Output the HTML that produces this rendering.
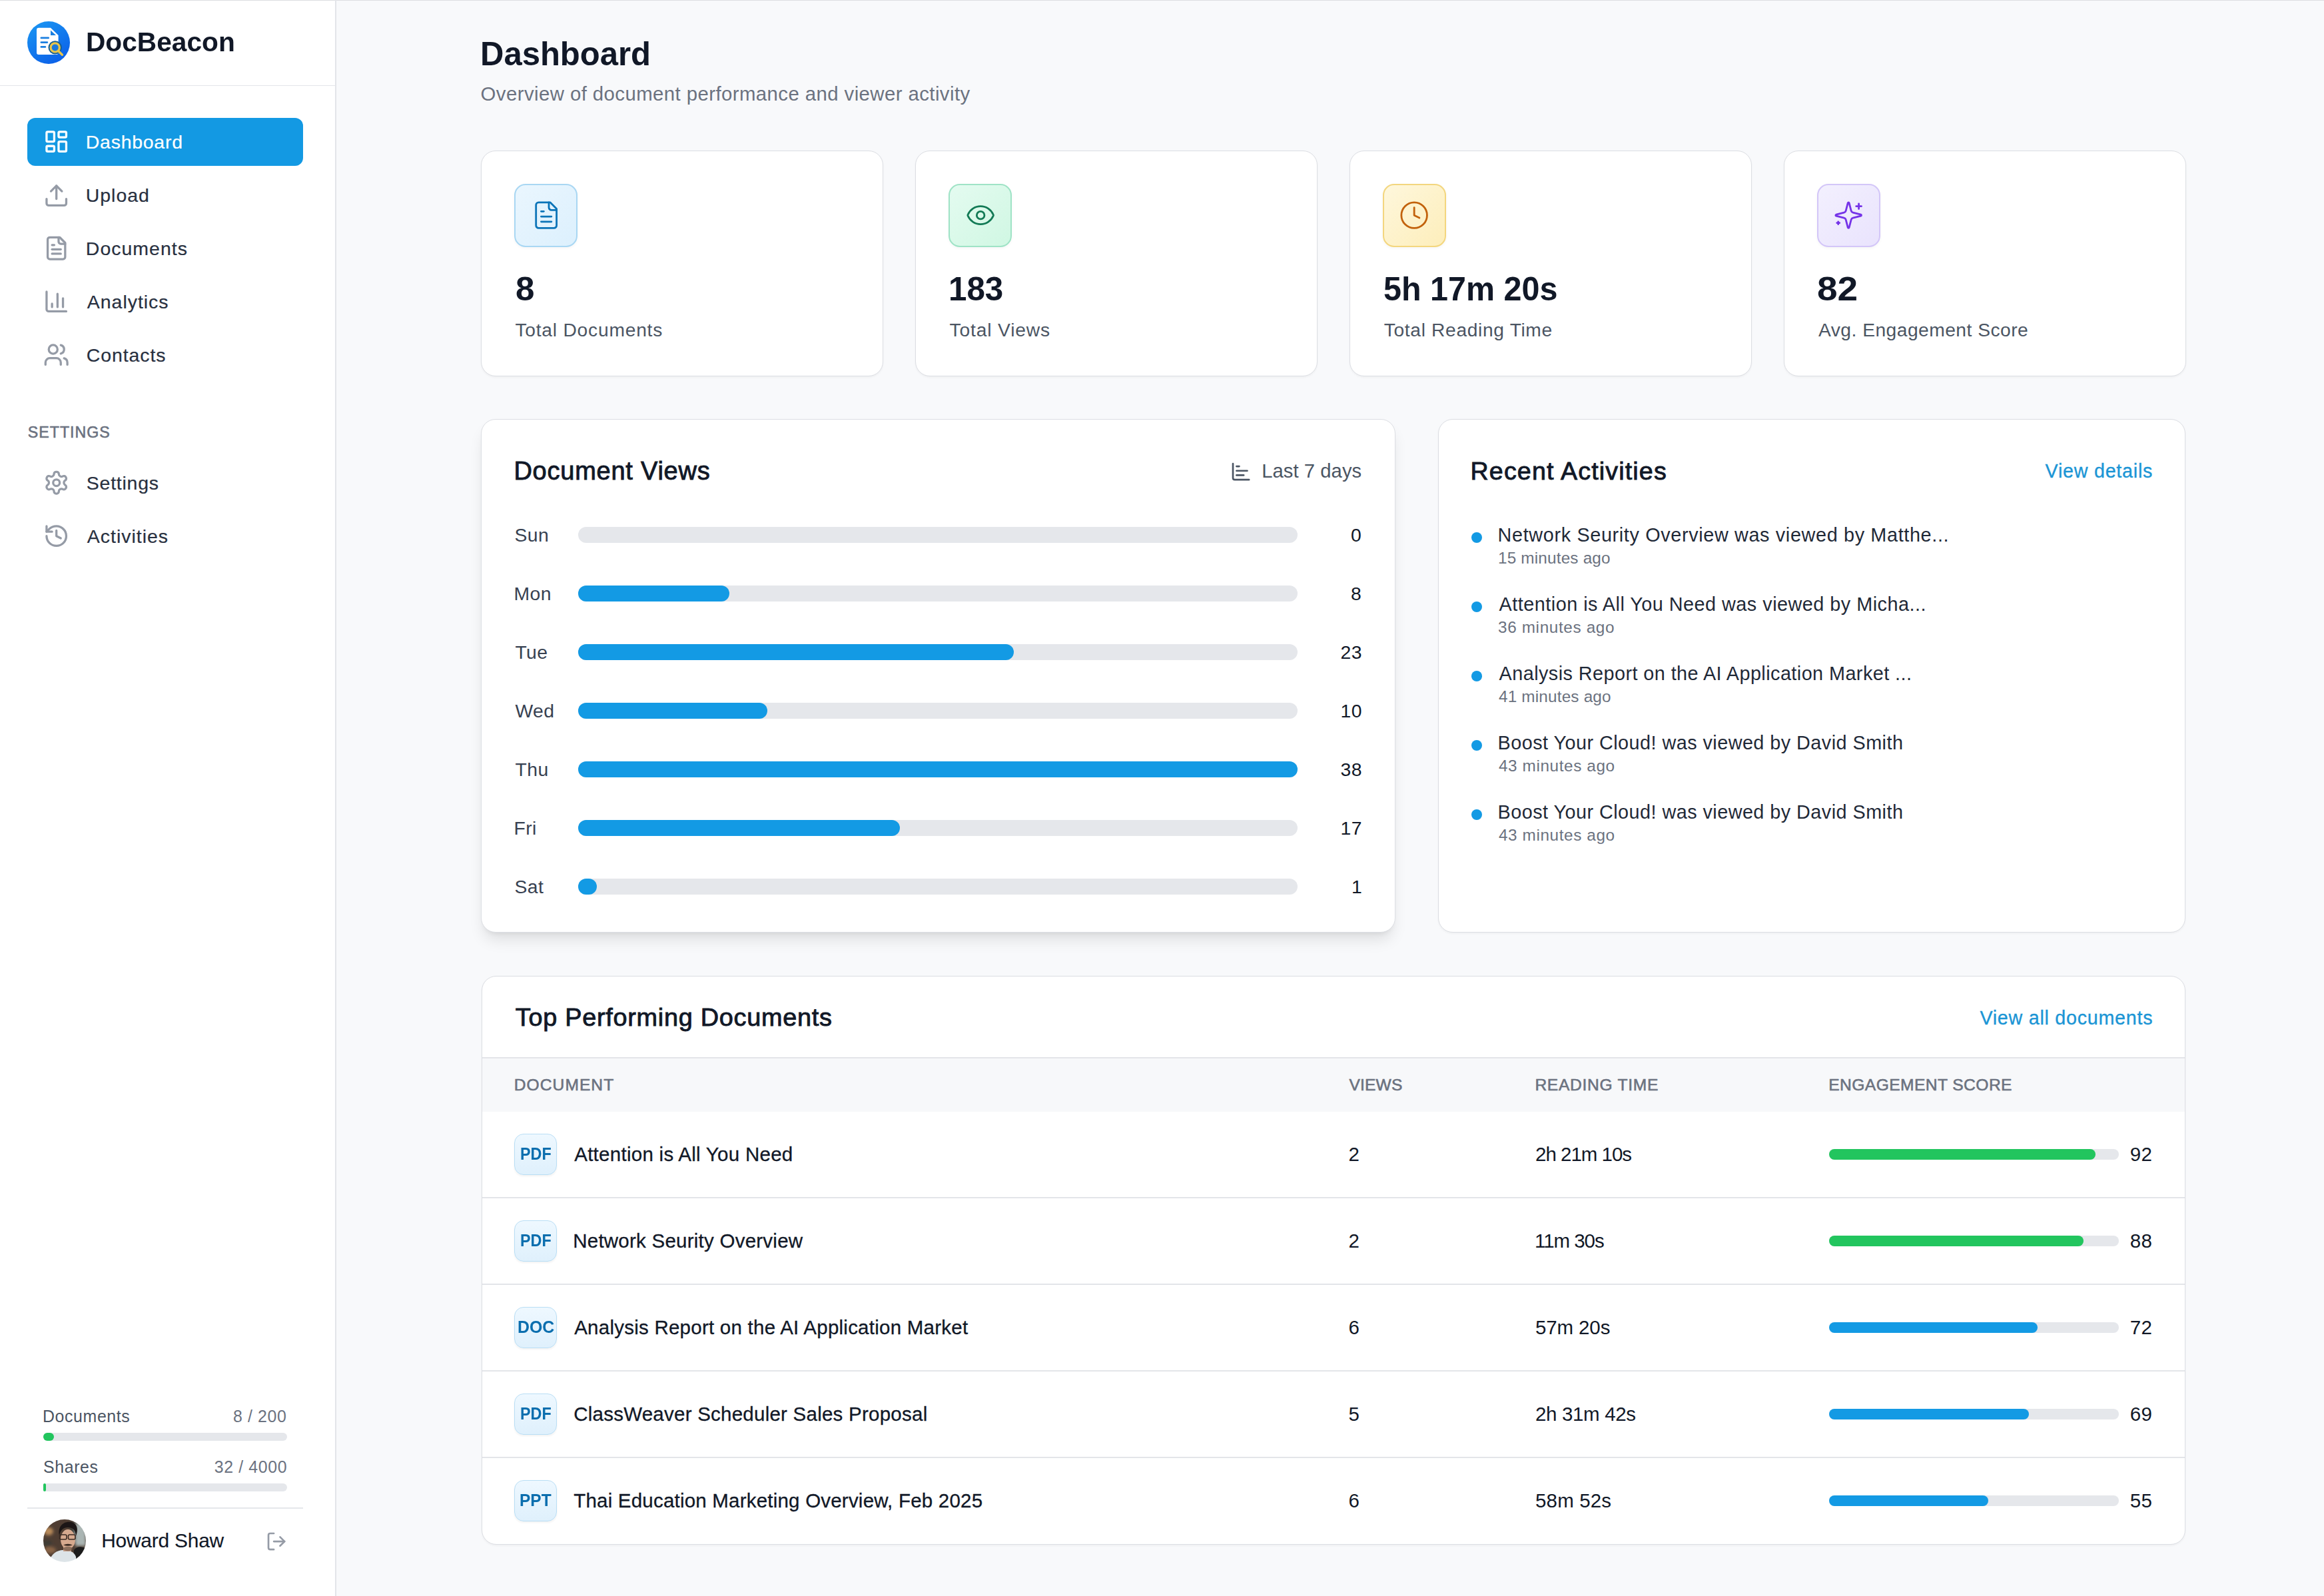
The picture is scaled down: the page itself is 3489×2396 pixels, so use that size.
<!DOCTYPE html>
<html><head><meta charset="utf-8"><title>DocBeacon Dashboard</title>
<style>
html,body{margin:0;padding:0;width:3489px;height:2396px;overflow:hidden;background:#f8f9fb}
body{position:relative;font-family:"Liberation Sans",sans-serif}
.t{position:absolute;line-height:0;white-space:nowrap}
</style></head><body>
<div style="position:absolute;left:0.00px;top:0.00px;width:3489.00px;height:2396.00px;background:#f8f9fb"></div>
<div style="position:absolute;left:0.00px;top:0.00px;width:504.50px;height:2396.00px;background:#ffffff"></div>
<div style="position:absolute;left:0.00px;top:0.00px;width:3489.00px;height:1.30px;background:#dcdde1"></div>
<div style="position:absolute;left:503.00px;top:0.00px;width:1.50px;height:2396.00px;background:#e3e5e9"></div>
<div style="position:absolute;left:0.00px;top:127.50px;width:503.00px;height:1.50px;background:#e3e5e9"></div>
<svg style="position:absolute;left:41px;top:32px" width="64" height="64" viewBox="0 0 64 64">
<defs><linearGradient id="lg" x1="0.2" y1="0" x2="0.8" y2="1"><stop offset="0" stop-color="#1a94f2"/><stop offset="1" stop-color="#0b5ee8"/></linearGradient></defs>
<circle cx="32" cy="32" r="32" fill="url(#lg)"/>
<path d="M17 9.7 h18 l11.6 11.3 v26 a3 3 0 0 1 -3 3 h-26.6 a3 3 0 0 1 -3 -3 v-34.3 a3 3 0 0 1 3 -3z" fill="#ffffff"/>
<path d="M35 13.5 l8 7.6 h-8z" fill="#1a7fe0"/>
<rect x="19.5" y="23.6" width="13.5" height="2.6" rx="1.3" fill="#1a7fe0"/>
<rect x="19.5" y="30.3" width="11.7" height="2.6" rx="1.3" fill="#1a7fe0"/>
<rect x="19.5" y="37.1" width="8.7" height="2.6" rx="1.3" fill="#1a7fe0"/>
<circle cx="41.7" cy="39.4" r="10.2" fill="#155f96"/>
<circle cx="41.7" cy="39.4" r="6.6" fill="#1a78dc" stroke="#e9c54a" stroke-width="3.2"/>
<path d="M47 45 l5.4 5.2" stroke="#e9c54a" stroke-width="3.4" stroke-linecap="round"/>
</svg>
<div style="position:absolute;left:41.00px;top:177.00px;width:414.00px;height:72.00px;background:#1399e3;border-radius:12px"></div>
<svg style="position:absolute;left:65.30px;top:193.40px" width="39.40" height="39.40" viewBox="0 0 24 24" fill="none" stroke="#ffffff" stroke-width="2" stroke-linecap="round" stroke-linejoin="round"><rect width="7" height="9" x="3" y="3" rx="1"/><rect width="7" height="5" x="14" y="3" rx="1"/><rect width="7" height="9" x="14" y="12" rx="1"/><rect width="7" height="5" x="3" y="16" rx="1"/></svg>
<svg style="position:absolute;left:65.30px;top:273.50px" width="39.40" height="39.40" viewBox="0 0 24 24" fill="none" stroke="#959ba6" stroke-width="2" stroke-linecap="round" stroke-linejoin="round"><path d="M21 15v4a2 2 0 0 1-2 2H5a2 2 0 0 1-2-2v-4"/><polyline points="17 8 12 3 7 8"/><line x1="12" x2="12" y1="3" y2="15"/></svg>
<svg style="position:absolute;left:65.30px;top:353.20px" width="39.40" height="39.40" viewBox="0 0 24 24" fill="none" stroke="#959ba6" stroke-width="2" stroke-linecap="round" stroke-linejoin="round"><path d="M15 2H6a2 2 0 0 0-2 2v16a2 2 0 0 0 2 2h12a2 2 0 0 0 2-2V7Z"/><path d="M14 2v4a2 2 0 0 0 2 2h4"/><path d="M10 9H8"/><path d="M16 13H8"/><path d="M16 17H8"/></svg>
<svg style="position:absolute;left:65.30px;top:432.90px" width="39.40" height="39.40" viewBox="0 0 24 24" fill="none" stroke="#959ba6" stroke-width="2" stroke-linecap="round" stroke-linejoin="round"><path d="M3 3v16a2 2 0 0 0 2 2h16"/><path d="M18 17V9"/><path d="M13 17V5"/><path d="M8 17v-3"/></svg>
<svg style="position:absolute;left:65.30px;top:512.80px" width="39.40" height="39.40" viewBox="0 0 24 24" fill="none" stroke="#959ba6" stroke-width="2" stroke-linecap="round" stroke-linejoin="round"><path d="M16 21v-2a4 4 0 0 0-4-4H6a4 4 0 0 0-4 4v2"/><circle cx="9" cy="7" r="4"/><path d="M22 21v-2a4 4 0 0 0-3-3.87"/><path d="M16 3.13a4 4 0 0 1 0 7.75"/></svg>
<svg style="position:absolute;left:65.30px;top:704.90px" width="39.40" height="39.40" viewBox="0 0 24 24" fill="none" stroke="#959ba6" stroke-width="2" stroke-linecap="round" stroke-linejoin="round"><path d="M12.22 2h-.44a2 2 0 0 0-2 2v.18a2 2 0 0 1-1 1.73l-.43.25a2 2 0 0 1-2 0l-.15-.08a2 2 0 0 0-2.73.73l-.22.38a2 2 0 0 0 .73 2.730l.15.1a2 2 0 0 1 1 1.72v.51a2 2 0 0 1-1 1.74l-.15.09a2 2 0 0 0-.73 2.73l.22.38a2 2 0 0 0 2.73.73l.15-.08a2 2 0 0 1 2 0l.43.25a2 2 0 0 1 1 1.73V20a2 2 0 0 0 2 2h.44a2 2 0 0 0 2-2v-.18a2 2 0 0 1 1-1.73l.43-.25a2 2 0 0 1 2 0l.15.08a2 2 0 0 0 2.73-.73l.22-.39a2 2 0 0 0-.73-2.73l-.15-.08a2 2 0 0 1-1-1.74v-.5a2 2 0 0 1 1-1.74l.15-.09a2 2 0 0 0 .73-2.73l-.22-.38a2 2 0 0 0-2.73-.73l-.15.08a2 2 0 0 1-2 0l-.43-.25a2 2 0 0 1-1-1.73V4a2 2 0 0 0-2-2z"/><circle cx="12" cy="12" r="3"/></svg>
<svg style="position:absolute;left:65.30px;top:784.90px" width="39.40" height="39.40" viewBox="0 0 24 24" fill="none" stroke="#959ba6" stroke-width="2" stroke-linecap="round" stroke-linejoin="round"><path d="M3 12a9 9 0 1 0 9-9 9.75 9.75 0 0 0-6.74 2.74L3 8"/><path d="M3 3v5h5"/><path d="M12 7v5l4 2"/></svg>
<div style="position:absolute;left:65.00px;top:2151.00px;width:365.70px;height:12.00px;background:#e5e7eb;border-radius:6px"></div>
<div style="position:absolute;left:65.00px;top:2151.00px;width:15.50px;height:12.00px;background:#22c55e;border-radius:6px"></div>
<div style="position:absolute;left:65.00px;top:2227.00px;width:365.70px;height:12.00px;background:#e5e7eb;border-radius:6px"></div>
<div style="position:absolute;left:65.00px;top:2227.00px;width:3.50px;height:12.00px;background:#22c55e;border-radius:2px"></div>
<div style="position:absolute;left:41.00px;top:2263.00px;width:414.00px;height:1.50px;background:#e5e7eb"></div>
<svg style="position:absolute;left:65px;top:2281px" width="64" height="64" viewBox="0 0 64 64">
<defs><clipPath id="av"><circle cx="32" cy="32" r="32"/></clipPath>
<filter id="bl" x="-10%" y="-10%" width="120%" height="120%"><feGaussianBlur stdDeviation="0.7"/></filter>
<filter id="bl2"><feGaussianBlur stdDeviation="2"/></filter></defs>
<g clip-path="url(#av)"><g filter="url(#bl)">
<rect width="64" height="64" fill="#4f3e33"/>
<g filter="url(#bl2)">
<ellipse cx="8" cy="18" rx="7" ry="6" fill="#b88a5a"/>
<ellipse cx="6" cy="36" rx="7" ry="5" fill="#3e3a36"/>
<ellipse cx="10" cy="46" rx="9" ry="5" fill="#8a6547"/>
<rect x="48" y="6" width="16" height="34" fill="#aab5b3"/>
<rect x="40" y="4" width="8" height="30" fill="#3b3a35"/>
</g>
<path d="M44 64 L46 46 C50 40 58 40 64 44 L64 64z" fill="#1b1b1b"/>
<path d="M8 64 C12 52 20 46 30 46 C38 46 46 48 49 56 L50 64z" fill="#dde4e8"/>
<rect x="30" y="40" width="12" height="8" fill="#c49a82"/>
<ellipse cx="37" cy="30" rx="11" ry="15" fill="#d6a98e"/>
<path d="M24 24 C21 8 33 2 42 4 C51 6 53 15 49 25 C48 15 44 12 37 12 C30 12 26 16 24 24z" fill="#1e1915"/>
<rect x="24.5" y="23" width="10.5" height="7" rx="2" fill="none" stroke="#3a2a22" stroke-width="1.6"/>
<rect x="37.5" y="23" width="10.5" height="7" rx="2" fill="none" stroke="#3a2a22" stroke-width="1.6"/>
<path d="M30 38.5 q7 -3.5 14 0 q-7 2.5 -14 0z" fill="#3a2a20"/>
<ellipse cx="37" cy="44" rx="7" ry="3.2" fill="#7a6050" opacity="0.8"/>
</g></g></svg>
<svg style="position:absolute;left:398.90px;top:2297.80px" width="32.20" height="32.20" viewBox="0 0 24 24" fill="none" stroke="#959ba6" stroke-width="2" stroke-linecap="round" stroke-linejoin="round"><path d="M9 21H5a2 2 0 0 1-2-2V5a2 2 0 0 1 2-2h4"/><polyline points="16 17 21 12 16 7"/><line x1="21" x2="9" y1="12" y2="12"/></svg>
<div style="position:absolute;left:722.30px;top:226.00px;width:603.90px;height:339.00px;background:#fff;border:1.5px solid #dcdee3;border-radius:22px;box-sizing:border-box;box-shadow:0 1.5px 3px rgba(0,0,0,0.04)"></div>
<div style="position:absolute;left:772.30px;top:275.50px;width:95.00px;height:95.00px;background:linear-gradient(135deg,#eaf6fe,#dcf0fd);border:2px solid #a9d7f3;border-radius:17px;box-sizing:border-box;box-shadow:0 2px 4px rgba(0,0,0,0.04)"></div>
<svg style="position:absolute;left:796.65px;top:299.85px" width="46.30" height="46.30" viewBox="0 0 24 24" fill="none" stroke="#0b74b8" stroke-width="1.45" stroke-linecap="round" stroke-linejoin="round"><path d="M15 2H6a2 2 0 0 0-2 2v16a2 2 0 0 0 2 2h12a2 2 0 0 0 2-2V7Z"/><path d="M14 2v4a2 2 0 0 0 2 2h4"/><path d="M10 9H8"/><path d="M16 13H8"/><path d="M16 17H8"/></svg>
<div style="position:absolute;left:1374.20px;top:226.00px;width:603.90px;height:339.00px;background:#fff;border:1.5px solid #dcdee3;border-radius:22px;box-sizing:border-box;box-shadow:0 1.5px 3px rgba(0,0,0,0.04)"></div>
<div style="position:absolute;left:1424.20px;top:275.50px;width:95.00px;height:95.00px;background:linear-gradient(135deg,#e4fbf0,#d0f7e3);border:2px solid #9fe3c6;border-radius:17px;box-sizing:border-box;box-shadow:0 2px 4px rgba(0,0,0,0.04)"></div>
<svg style="position:absolute;left:1448.55px;top:299.85px" width="46.30" height="46.30" viewBox="0 0 24 24" fill="none" stroke="#127a55" stroke-width="1.45" stroke-linecap="round" stroke-linejoin="round"><path d="M2.062 12.348a1 1 0 0 1 0-.696 10.75 10.75 0 0 1 19.876 0 1 1 0 0 1 0 .696 10.75 10.75 0 0 1-19.876 0"/><circle cx="12" cy="12" r="3"/></svg>
<div style="position:absolute;left:2026.10px;top:226.00px;width:603.90px;height:339.00px;background:#fff;border:1.5px solid #dcdee3;border-radius:22px;box-sizing:border-box;box-shadow:0 1.5px 3px rgba(0,0,0,0.04)"></div>
<div style="position:absolute;left:2076.10px;top:275.50px;width:95.00px;height:95.00px;background:linear-gradient(135deg,#fef7dc,#fdeebb);border:2px solid #f3d67e;border-radius:17px;box-sizing:border-box;box-shadow:0 2px 4px rgba(0,0,0,0.04)"></div>
<svg style="position:absolute;left:2100.45px;top:299.85px" width="46.30" height="46.30" viewBox="0 0 24 24" fill="none" stroke="#c2620c" stroke-width="1.45" stroke-linecap="round" stroke-linejoin="round"><circle cx="12" cy="12" r="10"/><polyline points="12 6 12 12 16 14"/></svg>
<div style="position:absolute;left:2678.00px;top:226.00px;width:603.90px;height:339.00px;background:#fff;border:1.5px solid #dcdee3;border-radius:22px;box-sizing:border-box;box-shadow:0 1.5px 3px rgba(0,0,0,0.04)"></div>
<div style="position:absolute;left:2728.00px;top:275.50px;width:95.00px;height:95.00px;background:linear-gradient(135deg,#f3f0fe,#e9e3fd);border:2px solid #d3c6f8;border-radius:17px;box-sizing:border-box;box-shadow:0 2px 4px rgba(0,0,0,0.04)"></div>
<svg style="position:absolute;left:2752.35px;top:299.85px" width="46.30" height="46.30" viewBox="0 0 24 24" fill="none" stroke="#7533e8" stroke-width="1.45" stroke-linecap="round" stroke-linejoin="round"><path d="M9.937 15.5A2 2 0 0 0 8.5 14.063l-6.135-1.582a.5.5 0 0 1 0-.962L8.5 9.936A2 2 0 0 0 9.937 8.5l1.582-6.135a.5.5 0 0 1 .963 0L14.063 8.5A2 2 0 0 0 15.5 9.937l6.135 1.581a.5.5 0 0 1 0 .964L15.5 14.063a2 2 0 0 0-1.437 1.437l-1.582 6.135a.5.5 0 0 1-.963 0z"/><path d="M20 3v4"/><path d="M22 5h-4"/><path d="M4 17v2"/><path d="M5 18H3"/></svg>
<div style="position:absolute;left:722.20px;top:629.00px;width:1372.60px;height:770.50px;background:#fff;border:1.5px solid #dcdee3;border-radius:22px;box-sizing:border-box;box-shadow:0 15px 22px -4px rgba(0,0,0,0.10),0 6px 9px -6px rgba(0,0,0,0.10)"></div>
<svg style="position:absolute;left:1846.60px;top:691.50px" width="32.20" height="32.20" viewBox="0 0 24 24" fill="none" stroke="#4b5563" stroke-width="2" stroke-linecap="round" stroke-linejoin="round"><path d="M3 3v16a2 2 0 0 0 2 2h16"/><path d="M7 16h8"/><path d="M7 11h12"/><path d="M7 6h3"/></svg>
<div style="position:absolute;left:867.90px;top:791.45px;width:1080.60px;height:23.10px;background:#e5e7eb;border-radius:12px"></div>
<div style="position:absolute;left:867.90px;top:879.45px;width:1080.60px;height:23.10px;background:#e5e7eb;border-radius:12px"></div>
<div style="position:absolute;left:867.90px;top:879.45px;width:227.49px;height:23.10px;background:#139ae4;border-radius:12px"></div>
<div style="position:absolute;left:867.90px;top:967.45px;width:1080.60px;height:23.10px;background:#e5e7eb;border-radius:12px"></div>
<div style="position:absolute;left:867.90px;top:967.45px;width:654.05px;height:23.10px;background:#139ae4;border-radius:12px"></div>
<div style="position:absolute;left:867.90px;top:1055.45px;width:1080.60px;height:23.10px;background:#e5e7eb;border-radius:12px"></div>
<div style="position:absolute;left:867.90px;top:1055.45px;width:284.37px;height:23.10px;background:#139ae4;border-radius:12px"></div>
<div style="position:absolute;left:867.90px;top:1143.45px;width:1080.60px;height:23.10px;background:#e5e7eb;border-radius:12px"></div>
<div style="position:absolute;left:867.90px;top:1143.45px;width:1080.60px;height:23.10px;background:#139ae4;border-radius:12px"></div>
<div style="position:absolute;left:867.90px;top:1231.45px;width:1080.60px;height:23.10px;background:#e5e7eb;border-radius:12px"></div>
<div style="position:absolute;left:867.90px;top:1231.45px;width:483.43px;height:23.10px;background:#139ae4;border-radius:12px"></div>
<div style="position:absolute;left:867.90px;top:1319.45px;width:1080.60px;height:23.10px;background:#e5e7eb;border-radius:12px"></div>
<div style="position:absolute;left:867.90px;top:1319.45px;width:28.44px;height:23.10px;background:#139ae4;border-radius:12px"></div>
<div style="position:absolute;left:2158.90px;top:629.00px;width:1122.60px;height:771.00px;background:#fff;border:1.5px solid #dcdee3;border-radius:22px;box-sizing:border-box;box-shadow:0 1.5px 3px rgba(0,0,0,0.04)"></div>
<div style="position:absolute;left:2208.80px;top:798.80px;width:16.20px;height:16.20px;background:#139ae4;border-radius:50%"></div>
<div style="position:absolute;left:2208.80px;top:902.80px;width:16.20px;height:16.20px;background:#139ae4;border-radius:50%"></div>
<div style="position:absolute;left:2208.80px;top:1006.80px;width:16.20px;height:16.20px;background:#139ae4;border-radius:50%"></div>
<div style="position:absolute;left:2208.80px;top:1110.80px;width:16.20px;height:16.20px;background:#139ae4;border-radius:50%"></div>
<div style="position:absolute;left:2208.80px;top:1214.80px;width:16.20px;height:16.20px;background:#139ae4;border-radius:50%"></div>
<div style="position:absolute;left:722.70px;top:1465.30px;width:2558.80px;height:853.50px;background:#fff;border:1.5px solid #dcdee3;border-radius:22px;box-sizing:border-box;overflow:hidden;box-shadow:0 1.5px 3px rgba(0,0,0,0.04)"></div>
<div style="position:absolute;left:724.20px;top:1588.00px;width:2555.80px;height:80.90px;background:#f7f8fa"></div>
<div style="position:absolute;left:724.20px;top:1587.30px;width:2555.80px;height:1.50px;background:#e3e5e9"></div>
<div style="position:absolute;left:724.20px;top:1797.05px;width:2555.80px;height:1.50px;background:#e3e5e9"></div>
<div style="position:absolute;left:724.20px;top:1927.05px;width:2555.80px;height:1.50px;background:#e3e5e9"></div>
<div style="position:absolute;left:724.20px;top:2057.05px;width:2555.80px;height:1.50px;background:#e3e5e9"></div>
<div style="position:absolute;left:724.20px;top:2187.05px;width:2555.80px;height:1.50px;background:#e3e5e9"></div>
<div style="position:absolute;left:772.30px;top:1701.70px;width:63.30px;height:62.60px;background:linear-gradient(180deg,#eef8ff,#dff0fc);border:1.5px solid #b9def5;border-radius:14px;box-sizing:border-box;box-shadow:0 2px 3px rgba(0,0,0,0.05)"></div>
<div style="position:absolute;left:2745.70px;top:1725.10px;width:435.00px;height:15.80px;background:#e5e7eb;border-radius:8px"></div>
<div style="position:absolute;left:2745.70px;top:1725.10px;width:400.20px;height:15.80px;background:#22c55e;border-radius:8px"></div>
<div style="position:absolute;left:772.30px;top:1831.70px;width:63.30px;height:62.60px;background:linear-gradient(180deg,#eef8ff,#dff0fc);border:1.5px solid #b9def5;border-radius:14px;box-sizing:border-box;box-shadow:0 2px 3px rgba(0,0,0,0.05)"></div>
<div style="position:absolute;left:2745.70px;top:1855.10px;width:435.00px;height:15.80px;background:#e5e7eb;border-radius:8px"></div>
<div style="position:absolute;left:2745.70px;top:1855.10px;width:382.80px;height:15.80px;background:#22c55e;border-radius:8px"></div>
<div style="position:absolute;left:772.30px;top:1961.70px;width:63.30px;height:62.60px;background:linear-gradient(180deg,#eef8ff,#dff0fc);border:1.5px solid #b9def5;border-radius:14px;box-sizing:border-box;box-shadow:0 2px 3px rgba(0,0,0,0.05)"></div>
<div style="position:absolute;left:2745.70px;top:1985.10px;width:435.00px;height:15.80px;background:#e5e7eb;border-radius:8px"></div>
<div style="position:absolute;left:2745.70px;top:1985.10px;width:313.20px;height:15.80px;background:#139ae4;border-radius:8px"></div>
<div style="position:absolute;left:772.30px;top:2091.70px;width:63.30px;height:62.60px;background:linear-gradient(180deg,#eef8ff,#dff0fc);border:1.5px solid #b9def5;border-radius:14px;box-sizing:border-box;box-shadow:0 2px 3px rgba(0,0,0,0.05)"></div>
<div style="position:absolute;left:2745.70px;top:2115.10px;width:435.00px;height:15.80px;background:#e5e7eb;border-radius:8px"></div>
<div style="position:absolute;left:2745.70px;top:2115.10px;width:300.15px;height:15.80px;background:#139ae4;border-radius:8px"></div>
<div style="position:absolute;left:772.30px;top:2221.70px;width:63.30px;height:62.60px;background:linear-gradient(180deg,#eef8ff,#dff0fc);border:1.5px solid #b9def5;border-radius:14px;box-sizing:border-box;box-shadow:0 2px 3px rgba(0,0,0,0.05)"></div>
<div style="position:absolute;left:2745.70px;top:2245.10px;width:435.00px;height:15.80px;background:#e5e7eb;border-radius:8px"></div>
<div style="position:absolute;left:2745.70px;top:2245.10px;width:239.25px;height:15.80px;background:#139ae4;border-radius:8px"></div>
<div class="t" id="brand" style="left:129.43px;top:63.49px;font-size:41.57px;font-weight:700;color:#111827;letter-spacing:0.000px;transform:scaleX(0.9786);transform-origin:0 0">DocBeacon</div>
<div class="t" id="nav0" style="left:128.80px;top:213.33px;font-size:28.48px;font-weight:400;color:#ffffff;letter-spacing:0.738px;-webkit-text-stroke:0.20px #ffffff">Dashboard</div>
<div class="t" id="nav1" style="left:128.80px;top:293.43px;font-size:28.48px;font-weight:400;color:#283040;letter-spacing:0.960px;-webkit-text-stroke:0.20px #283040">Upload</div>
<div class="t" id="nav2" style="left:128.80px;top:373.13px;font-size:28.48px;font-weight:400;color:#283040;letter-spacing:1.025px;-webkit-text-stroke:0.20px #283040">Documents</div>
<div class="t" id="nav3" style="left:130.80px;top:452.83px;font-size:28.48px;font-weight:400;color:#283040;letter-spacing:0.975px;-webkit-text-stroke:0.20px #283040">Analytics</div>
<div class="t" id="nav4" style="left:129.80px;top:532.73px;font-size:28.48px;font-weight:400;color:#283040;letter-spacing:0.914px;-webkit-text-stroke:0.20px #283040">Contacts</div>
<div class="t" id="setlabel" style="left:41.80px;top:648.87px;font-size:23.18px;font-weight:400;color:#6b7280;letter-spacing:1.014px;-webkit-text-stroke:0.60px #6b7280">SETTINGS</div>
<div class="t" id="nav5" style="left:129.80px;top:724.83px;font-size:28.48px;font-weight:400;color:#283040;letter-spacing:0.757px;-webkit-text-stroke:0.20px #283040">Settings</div>
<div class="t" id="nav6" style="left:130.80px;top:804.83px;font-size:28.48px;font-weight:400;color:#283040;letter-spacing:0.989px;-webkit-text-stroke:0.20px #283040">Activities</div>
<div class="t" id="q1l" style="left:64.00px;top:2126.38px;font-size:24.89px;font-weight:400;color:#4b5563;letter-spacing:0.622px">Documents</div>
<div class="t" id="q1r" style="left:350.07px;top:2126.38px;font-size:24.89px;font-weight:400;color:#6b7280;letter-spacing:0.622px">8 / 200</div>
<div class="t" id="q2l" style="left:65.00px;top:2202.38px;font-size:24.89px;font-weight:400;color:#4b5563;letter-spacing:0.622px">Shares</div>
<div class="t" id="q2r" style="left:321.82px;top:2202.38px;font-size:24.89px;font-weight:400;color:#6b7280;letter-spacing:0.622px">32 / 4000</div>
<div class="t" id="user" style="left:152.20px;top:2313.23px;font-size:29.92px;font-weight:400;color:#111827;letter-spacing:-0.220px;-webkit-text-stroke:0.15px #111827">Howard Shaw</div>
<div class="t" id="title" style="left:721.47px;top:80.65px;font-size:50.35px;font-weight:700;color:#111827;letter-spacing:0.000px;transform:scaleX(0.9736);transform-origin:0 0">Dashboard</div>
<div class="t" id="subtitle" style="left:721.60px;top:140.83px;font-size:29.35px;font-weight:400;color:#6b7280;letter-spacing:0.429px">Overview of document performance and viewer activity</div>
<div class="t" id="sv0" style="left:773.56px;top:434.35px;font-size:49.20px;font-weight:700;color:#111827;letter-spacing:0.000px;transform:scaleX(1.0400);transform-origin:0 0">8</div>
<div class="t" id="sl0" style="left:773.40px;top:494.63px;font-size:28.20px;font-weight:400;color:#4b5563;letter-spacing:0.786px">Total Documents</div>
<div class="t" id="sv1" style="left:1423.80px;top:434.35px;font-size:49.20px;font-weight:700;color:#111827;letter-spacing:0.000px;transform:scaleX(1.0015);transform-origin:0 0">183</div>
<div class="t" id="sl1" style="left:1425.60px;top:494.63px;font-size:28.20px;font-weight:400;color:#4b5563;letter-spacing:0.850px">Total Views</div>
<div class="t" id="sv2" style="left:2077.03px;top:434.35px;font-size:49.20px;font-weight:700;color:#111827;letter-spacing:0.000px;transform:scaleX(0.9855);transform-origin:0 0">5h 17m 20s</div>
<div class="t" id="sl2" style="left:2077.80px;top:494.63px;font-size:28.20px;font-weight:400;color:#4b5563;letter-spacing:0.653px">Total Reading Time</div>
<div class="t" id="sv3" style="left:2728.07px;top:434.35px;font-size:49.20px;font-weight:700;color:#111827;letter-spacing:0.000px;transform:scaleX(1.1178);transform-origin:0 0">82</div>
<div class="t" id="sl3" style="left:2730.00px;top:494.63px;font-size:28.20px;font-weight:400;color:#4b5563;letter-spacing:0.485px">Avg. Engagement Score</div>
<div class="t" id="dvtitle" style="left:771.40px;top:706.84px;font-size:37.98px;font-weight:400;color:#111827;letter-spacing:0.777px;-webkit-text-stroke:0.90px #111827">Document Views</div>
<div class="t" id="last7" style="left:1894.20px;top:707.08px;font-size:29.20px;font-weight:400;color:#4b5563;letter-spacing:0.070px">Last 7 days</div>
<div class="t" id="day0" style="left:772.40px;top:803.18px;font-size:28.34px;font-weight:400;color:#374151;letter-spacing:0.467px">Sun</div>
<div class="t" id="dval0" style="left:2028.00px;top:802.88px;font-size:28.34px;font-weight:400;color:#111827;letter-spacing:0.000px">0</div>
<div class="t" id="day1" style="left:771.40px;top:891.18px;font-size:28.34px;font-weight:400;color:#374151;letter-spacing:0.467px">Mon</div>
<div class="t" id="dval1" style="left:2028.00px;top:890.88px;font-size:28.34px;font-weight:400;color:#111827;letter-spacing:0.000px">8</div>
<div class="t" id="day2" style="left:773.40px;top:979.18px;font-size:28.34px;font-weight:400;color:#374151;letter-spacing:0.467px">Tue</div>
<div class="t" id="dval2" style="left:2012.53px;top:978.88px;font-size:28.34px;font-weight:400;color:#111827;letter-spacing:0.467px">23</div>
<div class="t" id="day3" style="left:773.40px;top:1067.18px;font-size:28.34px;font-weight:400;color:#374151;letter-spacing:0.467px">Wed</div>
<div class="t" id="dval3" style="left:2012.53px;top:1066.88px;font-size:28.34px;font-weight:400;color:#111827;letter-spacing:0.467px">10</div>
<div class="t" id="day4" style="left:773.40px;top:1155.18px;font-size:28.34px;font-weight:400;color:#374151;letter-spacing:0.467px">Thu</div>
<div class="t" id="dval4" style="left:2012.53px;top:1154.88px;font-size:28.34px;font-weight:400;color:#111827;letter-spacing:0.467px">38</div>
<div class="t" id="day5" style="left:771.40px;top:1243.18px;font-size:28.34px;font-weight:400;color:#374151;letter-spacing:0.467px">Fri</div>
<div class="t" id="dval5" style="left:2012.53px;top:1242.88px;font-size:28.34px;font-weight:400;color:#111827;letter-spacing:0.467px">17</div>
<div class="t" id="day6" style="left:772.40px;top:1331.18px;font-size:28.34px;font-weight:400;color:#374151;letter-spacing:0.467px">Sat</div>
<div class="t" id="dval6" style="left:2029.00px;top:1330.88px;font-size:28.34px;font-weight:400;color:#111827;letter-spacing:0.000px">1</div>
<div class="t" id="ratitle" style="left:2207.60px;top:707.29px;font-size:37.55px;font-weight:400;color:#111827;letter-spacing:1.163px;-webkit-text-stroke:0.90px #111827">Recent Activities</div>
<div class="t" id="viewdetails" style="left:3070.60px;top:706.98px;font-size:28.63px;font-weight:400;color:#1b95d5;letter-spacing:0.773px;-webkit-text-stroke:0.35px #1b95d5">View details</div>
<div class="t" id="act0" style="left:2248.60px;top:803.03px;font-size:28.77px;font-weight:400;color:#1f2937;letter-spacing:0.662px">Network Seurity Overview was viewed by Matthe...</div>
<div class="t" id="time0" style="left:2249.00px;top:838.28px;font-size:24.31px;font-weight:400;color:#6b7280;letter-spacing:0.185px">15 minutes ago</div>
<div class="t" id="act1" style="left:2250.60px;top:907.03px;font-size:28.77px;font-weight:400;color:#1f2937;letter-spacing:0.502px">Attention is All You Need was viewed by Micha...</div>
<div class="t" id="time1" style="left:2249.00px;top:942.28px;font-size:24.31px;font-weight:400;color:#6b7280;letter-spacing:0.646px">36 minutes ago</div>
<div class="t" id="act2" style="left:2250.60px;top:1011.03px;font-size:28.77px;font-weight:400;color:#1f2937;letter-spacing:0.455px">Analysis Report on the AI Application Market ...</div>
<div class="t" id="time2" style="left:2250.00px;top:1046.28px;font-size:24.31px;font-weight:400;color:#6b7280;letter-spacing:0.185px">41 minutes ago</div>
<div class="t" id="act3" style="left:2248.60px;top:1115.03px;font-size:28.77px;font-weight:400;color:#1f2937;letter-spacing:0.474px">Boost Your Cloud! was viewed by David Smith</div>
<div class="t" id="time3" style="left:2250.00px;top:1150.28px;font-size:24.31px;font-weight:400;color:#6b7280;letter-spacing:0.608px">43 minutes ago</div>
<div class="t" id="act4" style="left:2248.60px;top:1219.03px;font-size:28.77px;font-weight:400;color:#1f2937;letter-spacing:0.474px">Boost Your Cloud! was viewed by David Smith</div>
<div class="t" id="time4" style="left:2250.00px;top:1254.28px;font-size:24.31px;font-weight:400;color:#6b7280;letter-spacing:0.608px">43 minutes ago</div>
<div class="t" id="tptitle" style="left:773.80px;top:1526.79px;font-size:37.83px;font-weight:400;color:#111827;letter-spacing:0.726px;-webkit-text-stroke:0.90px #111827">Top Performing Documents</div>
<div class="t" id="viewall" style="left:2972.40px;top:1527.68px;font-size:28.63px;font-weight:400;color:#1b95d5;letter-spacing:0.765px;-webkit-text-stroke:0.35px #1b95d5">View all documents</div>
<div class="t" id="h0" style="left:771.80px;top:1628.68px;font-size:24.58px;font-weight:400;color:#6b7280;letter-spacing:1.057px;-webkit-text-stroke:0.60px #6b7280">DOCUMENT</div>
<div class="t" id="h1" style="left:2025.40px;top:1628.68px;font-size:24.58px;font-weight:400;color:#6b7280;letter-spacing:0.200px;-webkit-text-stroke:0.60px #6b7280">VIEWS</div>
<div class="t" id="h2" style="left:2304.40px;top:1628.68px;font-size:24.58px;font-weight:400;color:#6b7280;letter-spacing:0.718px;-webkit-text-stroke:0.60px #6b7280">READING TIME</div>
<div class="t" id="h3" style="left:2745.20px;top:1628.68px;font-size:24.58px;font-weight:400;color:#6b7280;letter-spacing:0.447px;-webkit-text-stroke:0.60px #6b7280">ENGAGEMENT SCORE</div>
<div class="t" id="badge0" style="left:780.52px;top:1732.03px;font-size:25.32px;font-weight:700;color:#0b6eae;letter-spacing:0.000px;transform:scaleX(0.9220);transform-origin:0 0">PDF</div>
<div class="t" id="name0" style="left:862.20px;top:1732.78px;font-size:29.49px;font-weight:400;color:#111827;letter-spacing:0.283px;-webkit-text-stroke:0.30px #111827">Attention is All You Need</div>
<div class="t" id="views0" style="left:2024.40px;top:1732.78px;font-size:29.49px;font-weight:400;color:#111827;letter-spacing:0.000px">2</div>
<div class="t" id="rt0" style="left:2305.00px;top:1732.78px;font-size:29.49px;font-weight:400;color:#111827;letter-spacing:-1.000px">2h 21m 10s</div>
<div class="t" id="score0" style="left:3197.71px;top:1732.78px;font-size:29.49px;font-weight:400;color:#111827;letter-spacing:0.486px">92</div>
<div class="t" id="badge1" style="left:780.52px;top:1862.03px;font-size:25.32px;font-weight:700;color:#0b6eae;letter-spacing:0.000px;transform:scaleX(0.9220);transform-origin:0 0">PDF</div>
<div class="t" id="name1" style="left:860.20px;top:1862.78px;font-size:29.49px;font-weight:400;color:#111827;letter-spacing:0.250px;-webkit-text-stroke:0.30px #111827">Network Seurity Overview</div>
<div class="t" id="views1" style="left:2024.40px;top:1862.78px;font-size:29.49px;font-weight:400;color:#111827;letter-spacing:0.000px">2</div>
<div class="t" id="rt1" style="left:2304.00px;top:1862.78px;font-size:29.49px;font-weight:400;color:#111827;letter-spacing:-1.031px">11m 30s</div>
<div class="t" id="score1" style="left:3197.71px;top:1862.78px;font-size:29.49px;font-weight:400;color:#111827;letter-spacing:0.486px">88</div>
<div class="t" id="badge2" style="left:776.63px;top:1992.03px;font-size:25.32px;font-weight:700;color:#0b6eae;letter-spacing:0.000px;transform:scaleX(0.9835);transform-origin:0 0">DOC</div>
<div class="t" id="name2" style="left:862.20px;top:1992.78px;font-size:29.49px;font-weight:400;color:#111827;letter-spacing:0.250px;-webkit-text-stroke:0.30px #111827">Analysis Report on the AI Application Market</div>
<div class="t" id="views2" style="left:2024.40px;top:1992.78px;font-size:29.49px;font-weight:400;color:#111827;letter-spacing:0.000px">6</div>
<div class="t" id="rt2" style="left:2305.00px;top:1992.78px;font-size:29.49px;font-weight:400;color:#111827;letter-spacing:-0.115px">57m 20s</div>
<div class="t" id="score2" style="left:3197.71px;top:1992.78px;font-size:29.49px;font-weight:400;color:#111827;letter-spacing:0.486px">72</div>
<div class="t" id="badge3" style="left:780.52px;top:2122.03px;font-size:25.32px;font-weight:700;color:#0b6eae;letter-spacing:0.000px;transform:scaleX(0.9220);transform-origin:0 0">PDF</div>
<div class="t" id="name3" style="left:861.20px;top:2122.78px;font-size:29.49px;font-weight:400;color:#111827;letter-spacing:0.250px;-webkit-text-stroke:0.30px #111827">ClassWeaver Scheduler Sales Proposal</div>
<div class="t" id="views3" style="left:2024.40px;top:2122.78px;font-size:29.49px;font-weight:400;color:#111827;letter-spacing:0.000px">5</div>
<div class="t" id="rt3" style="left:2305.00px;top:2122.78px;font-size:29.49px;font-weight:400;color:#111827;letter-spacing:-0.342px">2h 31m 42s</div>
<div class="t" id="score3" style="left:3197.71px;top:2122.78px;font-size:29.49px;font-weight:400;color:#111827;letter-spacing:0.486px">69</div>
<div class="t" id="badge4" style="left:779.84px;top:2252.03px;font-size:25.32px;font-weight:700;color:#0b6eae;letter-spacing:0.000px;transform:scaleX(0.9668);transform-origin:0 0">PPT</div>
<div class="t" id="name4" style="left:861.20px;top:2252.78px;font-size:29.49px;font-weight:400;color:#111827;letter-spacing:0.217px;-webkit-text-stroke:0.30px #111827">Thai Education Marketing Overview, Feb 2025</div>
<div class="t" id="views4" style="left:2024.40px;top:2252.78px;font-size:29.49px;font-weight:400;color:#111827;letter-spacing:0.000px">6</div>
<div class="t" id="rt4" style="left:2305.00px;top:2252.78px;font-size:29.49px;font-weight:400;color:#111827;letter-spacing:0.169px">58m 52s</div>
<div class="t" id="score4" style="left:3197.71px;top:2252.78px;font-size:29.49px;font-weight:400;color:#111827;letter-spacing:0.486px">55</div>
</body></html>
